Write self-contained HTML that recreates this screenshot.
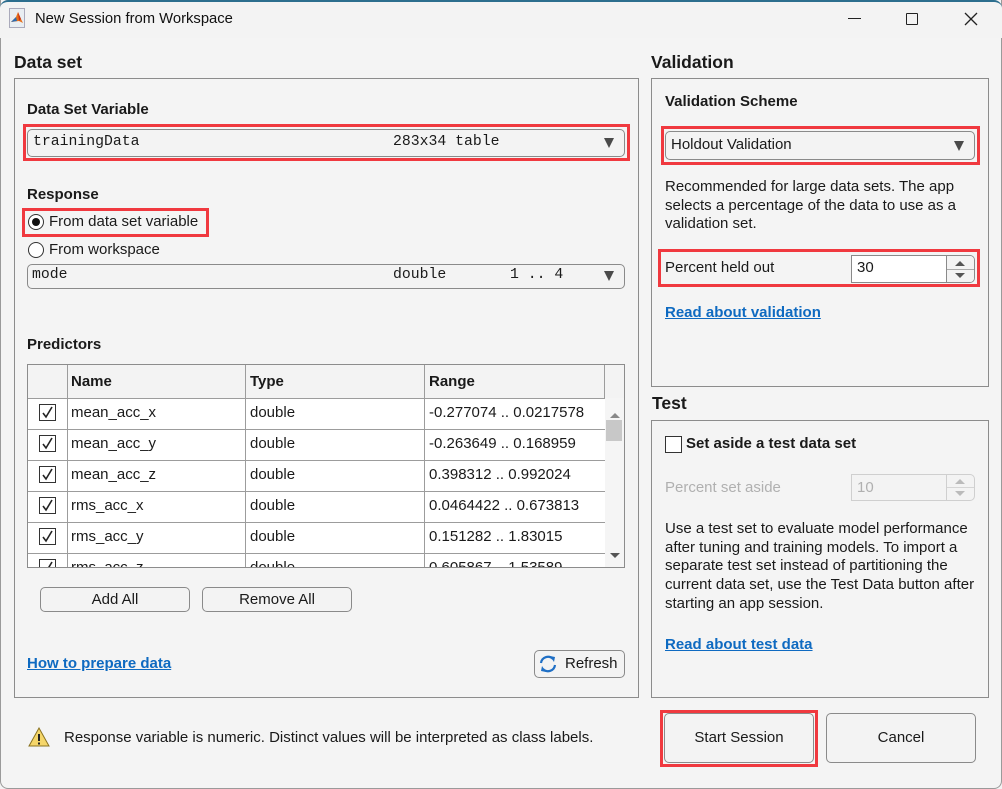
<!DOCTYPE html>
<html><head><meta charset="utf-8">
<style>
*{box-sizing:border-box;margin:0;padding:0}
body{width:1002px;height:789px;background:#f3f3f3;font-family:"Liberation Sans",sans-serif;font-size:15px;color:#1a1a1a;position:relative;overflow:hidden}
.a{position:absolute}
.win{left:0;top:0;width:1002px;height:789px;border:1px solid #9a9a9a;border-top:none;border-radius:0 0 8px 8px;background:#f4f4f4}
.tb{left:0;top:0;width:1002px;height:38px;background:#f3f3f3;border-top:2px solid #2c6e8e;border-radius:8px 8px 0 0}
.h{font-weight:bold;font-size:17.5px}
.b{font-weight:bold;font-size:15px}
.panel{border:1px solid #8c8c8c}
.red{border:3px solid #f0393f}
.dd{background:#f3f3f3;border:1px solid #8a8a8a;border-radius:5px}
.mono{font-family:"Liberation Mono",monospace;font-size:14.8px}
.tri{width:0;height:0;border-left:5.5px solid transparent;border-right:5.5px solid transparent;border-top:10px solid #4a4a4a}
.radio{width:16px;height:16px;border:1px solid #333;border-radius:50%;background:#fff}
.btn{border:1px solid #8a8a8a;border-radius:5px;background:#f3f3f3;text-align:center}
.link{color:#0e6ac1;text-decoration:underline;font-weight:bold}
.cb{width:17px;height:17px;border:1px solid #333;background:#fff}
.row{left:0;width:577px;border-top:1px solid #9c9c9c;height:31px}
.cell{top:6px}
.vl{width:1px;background:#9c9c9c;top:0;bottom:0}
</style></head><body>
<div class="a win"></div>
<div class="a tb"></div>
<svg class="a" style="left:9px;top:8px" width="16" height="20" viewBox="0 0 16 20">
<rect x="0.5" y="0.5" width="15" height="19" fill="#e9eef2" stroke="#aab" />
<path d="M2 14 L7 9 L9 4 L12 11 L14 15 L10 13 Z" fill="#e8701a"/>
<path d="M2 14 L7 9 L8 13 Z" fill="#2b6cb0"/>
<path d="M9 4 L12 11 L10 13 Z" fill="#c83218"/>
</svg>
<div class="a" style="left:35px;top:11px;font-size:14.8px;color:#111">New Session from Workspace</div>
<div class="a" style="left:848px;top:18px;width:13px;height:1px;background:#222"></div>
<div class="a" style="left:906px;top:13px;width:12px;height:12px;border:1.3px solid #222;border-radius:1px"></div>
<svg class="a" style="left:964px;top:12px" width="14" height="14"><path d="M1 1L13 13M13 1L1 13" stroke="#222" stroke-width="1.3"/></svg>

<div class="a h" style="left:14px;top:52px">Data set</div>
<div class="a panel" style="left:14px;top:78px;width:625px;height:620px"></div>
<div class="a b" style="left:27px;top:101px">Data Set Variable</div>
<div class="a red" style="left:23px;top:124px;width:607px;height:37px"></div>
<div class="a dd" style="left:27px;top:129px;width:598px;height:28px"></div>
<div class="a mono" style="left:33px;top:134px">trainingData</div>
<div class="a mono" style="left:393px;top:134px">283x34 table</div>
<div class="a tri" style="left:604px;top:138px"></div>

<div class="a b" style="left:27px;top:186px">Response</div>
<div class="a red" style="left:22px;top:208px;width:187px;height:29px"></div>
<div class="a radio" style="left:28px;top:214px"></div>
<div class="a" style="left:32px;top:218px;width:8px;height:8px;border-radius:50%;background:#111"></div>
<div class="a" style="left:49px;top:213px">From data set variable</div>
<div class="a radio" style="left:28px;top:242px"></div>
<div class="a" style="left:49px;top:241px">From workspace</div>
<div class="a dd" style="left:27px;top:264px;width:598px;height:25px"></div>
<div class="a mono" style="left:32px;top:267px">mode</div>
<div class="a mono" style="left:393px;top:267px">double</div>
<div class="a mono" style="left:510px;top:267px">1 .. 4</div>
<div class="a tri" style="left:604px;top:271px"></div>

<div class="a b" style="left:27px;top:336px">Predictors</div>
<div class="a" style="left:27px;top:364px;width:598px;height:204px;border:1px solid #8c8c8c;background:#fff;overflow:hidden">
  <div class="a" style="left:0;top:0;width:596px;height:33px;background:#f3f3f3"></div>
  <div class="a vl" style="left:39px"></div>
  <div class="a vl" style="left:217px"></div>
  <div class="a vl" style="left:396px"></div>
  <div class="a vl" style="left:576px;height:33px;bottom:auto"></div>
  <div class="a b" style="left:43px;top:8px">Name</div>
  <div class="a b" style="left:222px;top:8px">Type</div>
  <div class="a b" style="left:401px;top:8px">Range</div>
  <div class="a row" style="top:33px"></div>
  <div class="a row" style="top:64px"></div>
  <div class="a row" style="top:95px"></div>
  <div class="a row" style="top:126px"></div>
  <div class="a row" style="top:157px"></div>
  <div class="a row" style="top:188px"></div>
  <div class="a" style="left:0;top:33px;width:577px">
   <div class="a cb" style="left:11px;top:6px"></div><svg class="a" style="left:12px;top:7px" width="15" height="15"><path d="M3 8 L6 12 L12 2" stroke="#222" stroke-width="1.6" fill="none"/></svg>
   <div class="a cell" style="left:43px">mean_acc_x</div><div class="a cell" style="left:222px">double</div><div class="a cell" style="left:401px">-0.277074 .. 0.0217578</div></div>
  <div class="a" style="left:0;top:64px;width:577px">
   <div class="a cb" style="left:11px;top:6px"></div><svg class="a" style="left:12px;top:7px" width="15" height="15"><path d="M3 8 L6 12 L12 2" stroke="#222" stroke-width="1.6" fill="none"/></svg>
   <div class="a cell" style="left:43px">mean_acc_y</div><div class="a cell" style="left:222px">double</div><div class="a cell" style="left:401px">-0.263649 .. 0.168959</div></div>
  <div class="a" style="left:0;top:95px;width:577px">
   <div class="a cb" style="left:11px;top:6px"></div><svg class="a" style="left:12px;top:7px" width="15" height="15"><path d="M3 8 L6 12 L12 2" stroke="#222" stroke-width="1.6" fill="none"/></svg>
   <div class="a cell" style="left:43px">mean_acc_z</div><div class="a cell" style="left:222px">double</div><div class="a cell" style="left:401px">0.398312 .. 0.992024</div></div>
  <div class="a" style="left:0;top:126px;width:577px">
   <div class="a cb" style="left:11px;top:6px"></div><svg class="a" style="left:12px;top:7px" width="15" height="15"><path d="M3 8 L6 12 L12 2" stroke="#222" stroke-width="1.6" fill="none"/></svg>
   <div class="a cell" style="left:43px">rms_acc_x</div><div class="a cell" style="left:222px">double</div><div class="a cell" style="left:401px">0.0464422 .. 0.673813</div></div>
  <div class="a" style="left:0;top:157px;width:577px">
   <div class="a cb" style="left:11px;top:6px"></div><svg class="a" style="left:12px;top:7px" width="15" height="15"><path d="M3 8 L6 12 L12 2" stroke="#222" stroke-width="1.6" fill="none"/></svg>
   <div class="a cell" style="left:43px">rms_acc_y</div><div class="a cell" style="left:222px">double</div><div class="a cell" style="left:401px">0.151282 .. 1.83015</div></div>
  <div class="a" style="left:0;top:188px;width:577px">
   <div class="a cb" style="left:11px;top:6px"></div><svg class="a" style="left:12px;top:7px" width="15" height="15"><path d="M3 8 L6 12 L12 2" stroke="#222" stroke-width="1.6" fill="none"/></svg>
   <div class="a cell" style="left:43px">rms_acc_z</div><div class="a cell" style="left:222px">double</div><div class="a cell" style="left:401px">0.605867 .. 1.53589</div></div>
  <div class="a" style="left:577px;top:33px;width:20px;height:170px;background:#f5f5f5"></div>
  <div class="a" style="left:582px;top:48px;width:0;height:0;border-left:5px solid transparent;border-right:5px solid transparent;border-bottom:5px solid #888"></div>
  <div class="a" style="left:578px;top:55px;width:16px;height:21px;background:#c8c8c8"></div>
  <div class="a" style="left:582px;top:188px;width:0;height:0;border-left:5px solid transparent;border-right:5px solid transparent;border-top:5px solid #555"></div>
</div>
<div class="a btn" style="left:40px;top:587px;width:150px;height:25px;line-height:23px">Add All</div>
<div class="a btn" style="left:202px;top:587px;width:150px;height:25px;line-height:23px">Remove All</div>
<div class="a link" style="left:27px;top:655px">How to prepare data</div>
<div class="a btn" style="left:534px;top:650px;width:91px;height:28px"></div>
<svg class="a" style="left:538px;top:653px" width="20" height="22" viewBox="0 0 20 22">
<path d="M3 10 A7 7 0 0 1 15 6" stroke="#1f6fc5" stroke-width="2.2" fill="none"/>
<path d="M12 3 L17 4 L16 9 Z" fill="#1f6fc5"/>
<path d="M17 12 A7 7 0 0 1 5 16" stroke="#1f6fc5" stroke-width="2.2" fill="none"/>
<path d="M8 19 L3 18 L4 13 Z" fill="#1f6fc5"/>
</svg>
<div class="a" style="left:565px;top:655px">Refresh</div>

<svg class="a" style="left:28px;top:727px" width="22" height="20" viewBox="0 0 22 20"><path d="M11 1 L21 19 L1 19 Z" fill="#f5d66a" stroke="#8a7320" stroke-width="1"/><rect x="10" y="7" width="2" height="7" fill="#222"/><rect x="10" y="15.5" width="2" height="2" fill="#222"/></svg>
<div class="a" style="left:64px;top:729px">Response variable is numeric. Distinct values will be interpreted as class labels.</div>

<div class="a h" style="left:651px;top:52px">Validation</div>
<div class="a panel" style="left:651px;top:78px;width:338px;height:309px"></div>
<div class="a b" style="left:665px;top:93px">Validation Scheme</div>
<div class="a red" style="left:661px;top:126px;width:319px;height:39px"></div>
<div class="a dd" style="left:665px;top:131px;width:310px;height:29px"></div>
<div class="a" style="left:671px;top:136px">Holdout Validation</div>
<div class="a tri" style="left:954px;top:141px"></div>
<div class="a" style="left:665px;top:178px;width:310px;line-height:18.7px">Recommended for large data sets. The app selects a percentage of the data to use as a validation set.</div>
<div class="a red" style="left:658px;top:249px;width:322px;height:38px"></div>
<div class="a" style="left:665px;top:259px">Percent held out</div>
<div class="a" style="left:851px;top:255px;width:124px;height:28px;border:1px solid #8a8a8a;background:#fff;border-radius:0 5px 5px 0"></div>
<div class="a" style="left:946px;top:256px;width:28px;height:26px;background:#f3f3f3;border-left:1px solid #8a8a8a;border-radius:0 4px 4px 0"></div>
<div class="a" style="left:947px;top:269px;width:27px;height:1px;background:#aaa"></div>
<div class="a" style="left:955px;top:261px;border-left:5px solid transparent;border-right:5px solid transparent;border-bottom:5px solid #555"></div>
<div class="a" style="left:955px;top:273px;border-left:5px solid transparent;border-right:5px solid transparent;border-top:5px solid #555"></div>
<div class="a" style="left:857px;top:259px">30</div>
<div class="a link" style="left:665px;top:304px">Read about validation</div>

<div class="a h" style="left:652px;top:393px">Test</div>
<div class="a panel" style="left:651px;top:420px;width:338px;height:278px"></div>
<div class="a cb" style="left:665px;top:436px;width:17px;height:17px"></div>
<div class="a b" style="left:686px;top:435px">Set aside a test data set</div>
<div class="a" style="left:665px;top:479px;color:#b0b0b0">Percent set aside</div>
<div class="a" style="left:851px;top:474px;width:124px;height:27px;border:1px solid #cfcfcf;background:#f3f3f3;border-radius:0 5px 5px 0"></div>
<div class="a" style="left:946px;top:475px;width:1px;height:25px;background:#cfcfcf"></div>
<div class="a" style="left:947px;top:487px;width:27px;height:1px;background:#d5d5d5"></div>
<div class="a" style="left:955px;top:479px;border-left:5px solid transparent;border-right:5px solid transparent;border-bottom:5px solid #bbb"></div>
<div class="a" style="left:955px;top:491px;border-left:5px solid transparent;border-right:5px solid transparent;border-top:5px solid #bbb"></div>
<div class="a" style="left:857px;top:479px;color:#b0b0b0">10</div>
<div class="a" style="left:665px;top:520px;width:320px;line-height:18.7px">Use a test set to evaluate model performance after tuning and training models. To import a separate test set instead of partitioning the current data set, use the Test Data button after starting an app session.</div>
<div class="a link" style="left:665px;top:636px">Read about test data</div>

<div class="a red" style="left:660px;top:710px;width:158px;height:57px"></div>
<div class="a btn" style="left:664px;top:713px;width:150px;height:50px;line-height:48px">Start Session</div>
<div class="a btn" style="left:826px;top:713px;width:150px;height:50px;line-height:48px">Cancel</div>
</body></html>
